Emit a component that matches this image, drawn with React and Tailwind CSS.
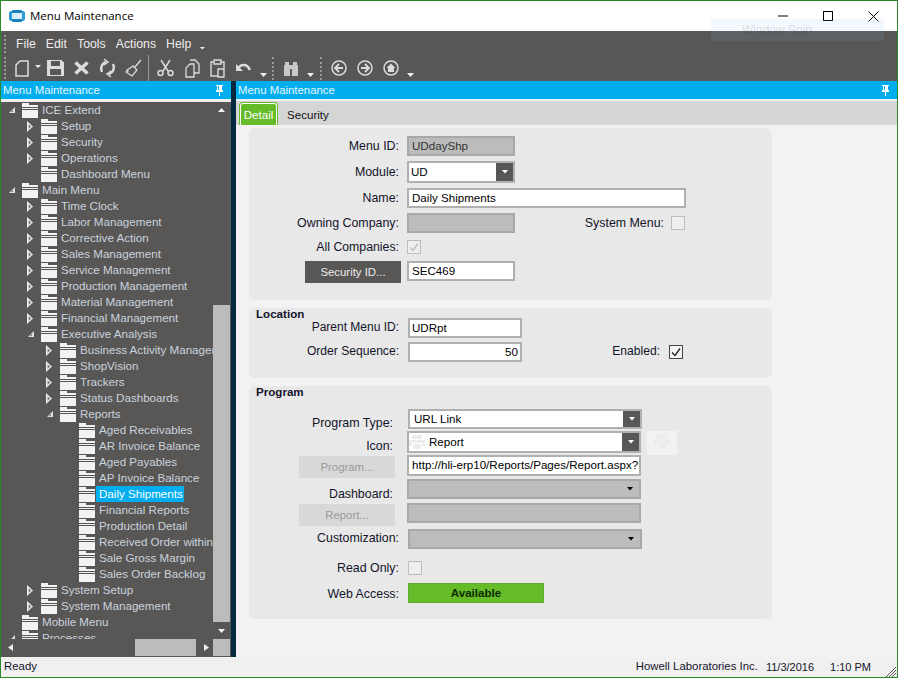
const Folder = () => (
  <svg width="17" height="16" viewBox="0 0 17 16" className="shrink-0" shapeRendering="crispEdges">
    <path d="M1 1h7v2h9v2H1z" fill="#f2f2f2" />
    <path d="M1 6h16v1H1z" fill="#f2f2f2" />
    <path d="M1 8h16v8H1z" fill="#f2f2f2" />
  </svg>
);
const Exp = ({ open }) => open ? (
  <svg width="8" height="8" viewBox="0 0 8 8" className="shrink-0"><path d="M7 1v6H1z" fill="#ddd" /><path d="M5 4v2H3z" fill="#777" /></svg>
) : (
  <svg width="8" height="11" viewBox="0 0 8 11" className="shrink-0"><path d="M0 0l6 5.500L0 11z" fill="#f0f0f0" /><path d="M1.500 3l3 2.500-3 2.500z" fill="#888" /></svg>
);
const Node = ({ level, state, label, sel }) => {
  const pad = ["pl-[7px]", "pl-[26px]", "pl-[45px]", "pl-[64px]"][level];
  return (
    <div className={`flex items-center h-4 whitespace-nowrap ${pad}`}>
      <span className="w-[8px] shrink-0 flex items-center justify-center">{state ? <Exp open={state === "o"} /> : null}</span>
      <span className="ml-[5px]"><Folder /></span>
      <span className={`ml-[1px] pl-[3px] pr-[1px] leading-4 text-[11.6px] ${sel ? "bg-[#00aeef] text-white" : "text-[#c9d3df]"}`}>{label}</span>
    </div>
  );
};
const tree = [
  [0, "o", "ICE Extend"], [1, "c", "Setup"], [1, "c", "Security"], [1, "c", "Operations"], [1, "", "Dashboard Menu"],
  [0, "o", "Main Menu"], [1, "c", "Time Clock"], [1, "c", "Labor Management"], [1, "c", "Corrective Action"], [1, "c", "Sales Management"],
  [1, "c", "Service Management"], [1, "c", "Production Management"], [1, "c", "Material Management"], [1, "c", "Financial Management"],
  [1, "o", "Executive Analysis"], [2, "c", "Business Activity Management"], [2, "c", "ShopVision"], [2, "c", "Trackers"], [2, "c", "Status Dashboards"],
  [2, "o", "Reports"], [3, "", "Aged Receivables"], [3, "", "AR Invoice Balance"], [3, "", "Aged Payables"], [3, "", "AP Invoice Balance"],
  [3, "", "Daily Shipments", true], [3, "", "Financial Reports"], [3, "", "Production Detail"], [3, "", "Received Order within Promise"],
  [3, "", "Sale Gross Margin"], [3, "", "Sales Order Backlog"], [1, "c", "System Setup"], [1, "c", "System Management"], [0, "", "Mobile Menu"], [0, "o", "Processes"],
];
const Pin = () => (
  <svg width="9" height="12" viewBox="0 0 9 12" shapeRendering="crispEdges"><path d="M1 1h7v1H7v4h1v2H5v4H4V8H1V6h1V2H1zM3 2v4h1V2z" fill="#fff" /></svg>
);
const Drop = () => (
  <svg width="6" height="4" viewBox="0 0 6 4" className="shrink-0"><path d="M0 0h6L3 3.500z" fill="currentColor" /></svg>
);
const TinyDrop = ({ cls = "ml-[8px]" }) => <span className={`${cls} mt-[14px] w-[7px] h-[4px] bg-[#eee] [clip-path:polygon(0_0,100%_0,50%_100%)]`} />;
const Grip = () => <span className="w-[3px] self-stretch my-[2px] border-l-2 border-dotted border-[#9a9a98]" />;
const I = ({ children, w = 22, vb = "0 0 22 22", cls = "" }) => (
  <svg width={w} height="22" viewBox={vb} className={`shrink-0 ${cls}`} fill="none" stroke="#dcdcdc" strokeWidth="2">{children}</svg>
);
const Label = ({ children, cls = "w-[150px]", size = "text-[12.4px]" }) => <span className={`${cls} text-right ${size} text-[#14142b] shrink-0 whitespace-nowrap`}>{children}</span>;
const Input = ({ children, cls = "", disabled, right }) => (
  <div className={`flex items-center h-5 border-2 px-[2px] text-[11.6px] overflow-hidden whitespace-nowrap ${disabled ? "bg-[#bcbcbc] border-[#a8a8a8] text-[#333]" : "bg-white border-[#b0b0b0] text-black"} ${right ? "justify-end" : ""} ${cls}`}>{children}</div>
);
const Select = ({ children, cls = "", h = "h-5", pl = "pl-[4px]" }) => (
  <div className={`flex items-center ${h} border-2 border-[#b0b0b0] bg-white text-black text-[11.6px] ${cls}`}>
    <span className={`flex-1 flex items-center overflow-hidden whitespace-nowrap ${pl}`}>{children}</span>
    <span className="w-[17px] self-stretch bg-[#595755] text-white flex items-center justify-center"><Drop /></span>
  </div>
);
const DisSelect = ({ cls = "" }) => (
  <div className={`flex items-center justify-end h-5 border-2 border-[#a8a8a8] bg-[#bcbcbc] text-black pr-[6px] ${cls}`}><Drop /></div>
);
const Check = ({ on, disabled, cls = "" }) => (
  <span className={`w-[14px] h-[14px] border shrink-0 flex items-center justify-center ${disabled ? "border-[#bdbdbd] bg-[#efefef]" : "border-[#444] bg-[#f4f4f4]"} ${cls}`}>
    {on ? <svg width="10" height="9" viewBox="0 0 10 9" fill="none" stroke={disabled ? "#bbb" : "#222"} strokeWidth="1.300"><path d="M1 4.500l3 3 5-7" /></svg> : null}
  </span>
);
const Printer = ({ color = "#ececec" }) => (
  <svg width="16" height="14" viewBox="0 0 16 14" className="shrink-0" shapeRendering="crispEdges"><path d="M3 0h10v4H3zM0 5h16v6h-3V8H3v3H0zM4 9h8v5H4z" fill={color} /></svg>
);
const Row = ({ cls, children }) => <div className={`flex ${cls}`}>{children}</div>;
const Btn = ({ children, cls }) => <div className={`w-[96px] h-[22px] pt-[2px] flex items-center justify-center shrink-0 text-[11.4px] ${cls}`}>{children}</div>;
const Header = () => (
  <div className="h-[18px] shrink-0 bg-[#00aeef] text-[#e6f7ff] text-[11.4px] flex items-center justify-between pl-[2px] pr-[7px]"><span className="pt-px">Menu Maintenance</span><Pin /></div>
);

export default function App() {
  return (
    <div className="w-[898px] h-[678px] flex flex-col overflow-hidden border border-[#2a8a2a] bg-[#f0f0f0] text-[12px] font-['Liberation_Sans',Arial,sans-serif]">
      <div className="h-[30px] shrink-0 bg-white flex items-center pl-[8px] text-black">
        <svg width="16" height="14" viewBox="0 0 16 14" className="shrink-0">
          <rect x="0" y="2" width="16" height="10" rx="2" fill="#2f9bd8" />
          <rect x="3" y="1" width="10" height="12" rx="1" fill="#1e7fc0" />
          <rect x="3" y="4" width="10" height="6" fill="#d8eefb" />
        </svg>
        <span className="ml-[5px] text-[11.5px] font-['Open_Sans',sans-serif]">Menu Maintenance</span>
        <span className="ml-auto flex items-center">
          <svg width="10" height="2" viewBox="0 0 10 2"><path d="M0 1h10" stroke="#000" /></svg>
          <svg width="10" height="10" viewBox="0 0 10 10" className="ml-[35px]" shapeRendering="crispEdges"><rect x=".5" y=".5" width="9" height="9" fill="none" stroke="#000" /></svg>
          <svg width="11" height="11" viewBox="0 0 11 11" className="ml-[35px] mr-[18px]"><path d="M.5.500l10 10M10.500.500l-10 10" stroke="#000" /></svg>
        </span>
      </div>
      <div className="relative h-[50px] shrink-0 bg-[#595755] text-[#ececec] flex flex-col">
        <div className="absolute left-[710px] top-[-12px] w-[173px] h-[22px] bg-[#87b9f5]/10 flex items-center pl-[31px] text-[12px] text-[#131313]/15">Window Snip</div>
        <div className="h-[25px] flex items-center pl-[3px] gap-[9px] text-[12.3px] pt-[2px]">
          <Grip />
          <div className="flex items-center gap-[10px]">
            <span>File</span><span>Edit</span><span>Tools</span><span>Actions</span><span>Help</span>
          </div>
          <span className="-ml-[1px] mt-[8px] w-[6px] h-[3px] bg-[#eee] [clip-path:polygon(0_0,100%_0,50%_100%)]" />
        </div>
        <div className="flex-1 flex items-center pl-[3px]">
          <Grip />
          <span className="ml-[8px] flex"><I w={14} vb="0 0 14 22"><path d="M5 4h8v15H1V8z" strokeWidth="1.500" /></I></span>
          <span className="ml-[6px] mb-[3px] w-[6px] h-[3px] bg-[#eee] [clip-path:polygon(0_0,100%_0,50%_100%)]" />
          <span className="ml-[6px] flex"><svg width="17" height="16" viewBox="0 0 17 16" shapeRendering="crispEdges"><path d="M0 0h14l3 3v13H0zM4 1v5h9V1zM3 9v6h11V9z" fill="#dcdcdc" fillRule="evenodd" /></svg></span>
          <span className="ml-[10px] flex"><svg width="15" height="14" viewBox="0 0 15 14" fill="none" stroke="#dcdcdc" strokeWidth="3.500"><path d="M1.500 1.500l12 11M13.500 1.500l-12 11" /></svg></span>
          <span className="ml-[10px] flex"><I w={17} vb="0 0 17 22"><path d="M3 15a7 7 0 0 1 4-10M14 7a7 7 0 0 1-4 10" strokeWidth="2.500" /><path d="M5 2l4 3-4 3M12 14l-4 3 4 3" strokeWidth="1.500" /></I></span>
          <span className="ml-[9px] flex"><I w={17} vb="0 0 17 22"><path d="M16 3l-6 7M8 9l4 4-5 6-6-4 2-1-1-1z" strokeWidth="1.300" /></I></span>
          <span className="ml-[6px] w-px h-[26px] bg-[#9a9a98]" />
          <span className="ml-[8px] flex"><I w={17} vb="0 0 17 22"><circle cx="3.500" cy="16" r="2.500" strokeWidth="1.500" /><circle cx="13.500" cy="16" r="2.500" strokeWidth="1.500" /><path d="M4 3l7 11M13 3L6 14" strokeWidth="1.500" /></I></span>
          <span className="ml-[11px] flex"><I w={15} vb="0 0 15 22"><path d="M5 3h5l4 4v9H9M9 7H5l-4 4v9h8z" strokeWidth="1.300" /></I></span>
          <span className="ml-[10px] flex"><I w={15} vb="0 0 15 22"><path d="M4 5H1v14h7M11 5h3v7M4 3h7v4H4zM8 12h6v8H8z" strokeWidth="1.400" /></I></span>
          <span className="ml-[10px] flex"><I w={17} vb="0 0 17 22"><path d="M3 12c2-5 9-6 12 1" strokeWidth="2.500" /><path d="M1 7v7h7z" fill="#dcdcdc" stroke="none" /></I></span>
          <TinyDrop />
          <span className="ml-[5px] w-[3px] h-[23px] border-l-2 border-dotted border-[#9a9a98]" />
          <span className="ml-[8px] flex"><svg width="16" height="15" viewBox="0 0 16 15" shapeRendering="crispEdges"><path d="M2 1h4v3h4V1h4v3h1v11H9V8H7v7H1V4h1z" fill="#c8c8c8" /></svg></span>
          <TinyDrop />
          <span className="ml-[6px] w-[3px] h-[23px] border-l-2 border-dotted border-[#9a9a98]" />
          {["M12 11H5M8 7l-4 4 4 4", "M4 11h7M8 7l4 4-4 4"].map((d, i) => (
            <span key={i} className={i ? "ml-[10px] flex" : "ml-[8px] flex"}><I w={16} vb="0 0 16 22"><circle cx="8" cy="11" r="7" strokeWidth="1.500" /><path d={d} strokeWidth="1.800" /></I></span>
          ))}
          <span className="ml-[10px] flex"><I w={16} vb="0 0 16 22"><circle cx="8" cy="11" r="7" strokeWidth="1.500" /><path d="M3.500 11L8 6.500l4.500 4.500H11v4H5v-4z" fill="#dcdcdc" stroke="none" /></I></span>
          <TinyDrop />
        </div>
      </div>
      <div className="flex-1 flex min-h-0">
        <div className="w-[230px] shrink-0 flex flex-col bg-[#595755]">
          <Header />
          <div className="h-[3px] shrink-0 bg-[#f0f0f0]" />
          <div className="flex-1 flex min-h-0">
            <div className="w-[212px] overflow-hidden flex flex-col">
              <div className="h-[537px] overflow-hidden">
                {tree.map(([l, s, t, sel]) => <Node key={t} level={l} state={s} label={t} sel={sel} />)}
              </div>
              <div className="h-[18px] flex items-start pl-[7px]">
                <span className="mt-[5px] w-[5px] h-[7px] bg-[#eee] [clip-path:polygon(100%_0,100%_100%,0_50%)]" />
                <span className="ml-[122px] w-[61px] h-[17px] bg-[#bcbcbc]" />
                <span className="mt-[5px] ml-[8px] w-[5px] h-[7px] bg-[#eee] [clip-path:polygon(0_0,0_100%,100%_50%)]" />
              </div>
            </div>
            <div className="w-[17px] flex flex-col items-stretch pb-[1px]">
              <div className="h-[203px] shrink-0 pt-[6px] flex justify-center"><span className="w-[7px] h-[4px] bg-[#f4f4f4] [clip-path:polygon(50%_0,100%_100%,0_100%)]" /></div>
              <div className="h-[317px] shrink-0 bg-[#bcbcbc]" />
              <div className="flex-1 pt-[7px] flex justify-center"><span className="w-[7px] h-[4px] bg-[#f4f4f4] [clip-path:polygon(0_0,100%_0,50%_100%)]" /></div>
              <div className="h-[17px] shrink-0 bg-[#bcbcbc]" />
            </div>
          </div>
        </div>
        <div className="w-[5px] shrink-0 bg-[#03293f]" />
        <div className="flex-1 flex flex-col min-w-0 bg-[#f2f2f4]">
          <Header />
          <div className="h-[26px] shrink-0 bg-[#d5d5d5] border-t-2 border-[#f0f0f0] flex items-end pl-[3px]">
            <div className="h-[23px] w-[39px] border border-b-0 border-[#66bb29] bg-white rounded-t-[4px] pt-px px-px">
              <div className="h-full bg-[#66bb29] rounded-t-[2px] text-white text-[11.6px] flex items-center justify-center">Detail</div>
            </div>
            <div className="h-[20px] ml-[9px] text-[#111] text-[11.6px] flex items-center">Security</div>
          </div>
          <div className="flex-1 pl-[13px] pt-[3px] min-h-0">
            <div className="w-[523px] h-[172px] bg-[#e8e8e8] rounded-[6px] flex flex-col pt-[8px]">
              <Row cls="h-5 items-center"><Label>Menu ID:</Label><Input disabled cls="ml-[8px] w-[108px] pl-[3px]">UDdayShp</Input></Row>
              <Row cls="h-[22px] mt-[5px] items-center"><Label>Module:</Label><Select h="h-[22px]" pl="pl-[2px]" cls="ml-[8px] w-[108px]">UD</Select></Row>
              <Row cls="h-5 mt-[5px] items-center"><Label>Name:</Label><Input cls="ml-[8px] w-[279px] pl-[3px]">Daily Shipments</Input></Row>
              <Row cls="h-5 mt-[5px] items-center"><Label>Owning Company:</Label><Input disabled cls="ml-[8px] w-[108px]" /><Label cls="w-[149px]">System Menu:</Label><Check disabled cls="ml-[7px]" /></Row>
              <Row cls="h-[14px] mt-[7px] items-center"><Label size="text-[12.3px]">All Companies:</Label><Check on disabled cls="ml-[8px]" /></Row>
              <Row cls="h-[22px] mt-[7px] items-start">
                <Btn cls="ml-[56px] bg-[#595755] text-[#ececec]">Security ID...</Btn>
                <Input cls="ml-[6px] w-[108px] pl-[3px]">SEC469</Input>
              </Row>
            </div>
            <div className="w-[523px] h-[70px] mt-[8px] bg-[#e8e8e8] rounded-[6px] flex flex-col">
              <span className="pl-[7px] pb-[2px] font-bold text-[#14142b] text-[11.6px] leading-[11px]">Location</span>
              <Row cls="h-5 -mt-[3px] items-center"><Label cls="w-[150px] mb-[2px]" size="text-[12px]">Parent Menu ID:</Label><Input cls="ml-[9px] w-[114px]">UDRpt</Input></Row>
              <Row cls="h-5 mt-[4px] items-center"><Label cls="w-[150px] mb-[2px]" size="text-[12.1px]">Order Sequence:</Label><Input right cls="ml-[9px] w-[114px]">50</Input><Label cls="w-[138px] mb-[2px]" size="text-[12.1px]">Enabled:</Label><Check on cls="ml-[9px]" /></Row>
            </div>
            <div className="w-[523px] h-[233px] mt-[8px] bg-[#e8e8e8] rounded-[6px] flex flex-col">
              <span className="pl-[7px] pb-[2px] font-bold text-[#14142b] text-[11.6px] leading-[11px]">Program</span>
              <Row cls="h-5 mt-[10px] items-center"><Label cls="w-[144px] mt-[8px]">Program Type:</Label><Select cls="ml-[15px] w-[234px]">URL Link</Select></Row>
              <Row cls="h-[22px] mt-[2px] items-start">
                <Label cls="w-[144px] mt-[6px]">Icon:</Label>
                <Select h="h-[22px]" pl="pl-0" cls="ml-[14px] w-[234px]"><Printer /><span className="ml-[4px]">Report</span></Select>
                <span className="ml-[6px] w-[30px] h-[24px] bg-[#f2f2f4] flex items-start justify-center pt-[3px]"><Printer color="#ececec" /></span>
              </Row>
              <Row cls="h-[23px] mt-[2px] items-start">
                <Btn cls="ml-[50px] mt-px bg-[#d8d8d8] text-[#9a9a9a]">Program...</Btn>
                <Input cls="ml-[12px] w-[234px] !h-[21px] pl-[3px] pb-[2px]">http://hli-erp10/Reports/Pages/Report.aspx?ReportPath</Input>
              </Row>
              <Row cls="h-5 mt-px items-start"><Label cls="w-[144px] mt-[6px]">Dashboard:</Label><DisSelect cls="ml-[14px] w-[234px]" /></Row>
              <Row cls="h-[23px] mt-[4px] items-start">
                <Btn cls="ml-[50px] mt-px bg-[#d8d8d8] text-[#9a9a9a]">Report...</Btn>
                <Input disabled cls="ml-[12px] w-[234px]" />
              </Row>
              <Row cls="h-5 mt-[3px] items-center"><Label cls="w-[150px] mb-[2px]">Customization:</Label><DisSelect cls="ml-[9px] w-[234px]" /></Row>
              <Row cls="h-[14px] mt-[12px] items-center"><Label>Read Only:</Label><Check disabled cls="ml-[9px]" /></Row>
              <Row cls="h-5 mt-[8px] items-center"><Label cls="w-[150px] mt-[2px]">Web Access:</Label><div className="ml-[9px] w-[136px] h-5 bg-[#66bb29] border border-[#5fa92c] flex items-center justify-center font-bold text-[11.6px] text-[#0d2b00]">Available</div></Row>
            </div>
          </div>
        </div>
      </div>
      <div className="h-[20px] shrink-0 bg-[#f0f0f0] flex items-center pl-[3px] pr-[1px] text-[11.4px] text-[#14142b]">
        <span>Ready</span>
        <span className="ml-auto">Howell Laboratories Inc.</span>
        <span className="ml-[8px] text-[11px]">11/3/2016</span>
        <span className="ml-[16px] text-[11px]">1:10 PM</span>
        <svg width="11" height="11" viewBox="0 0 11 11" className="ml-[14px] self-end" fill="none" stroke="#555"><path d="M11 1L1 11M11 4l-7 7M11 7l-4 4" /></svg>
      </div>
    </div>
  );
}
